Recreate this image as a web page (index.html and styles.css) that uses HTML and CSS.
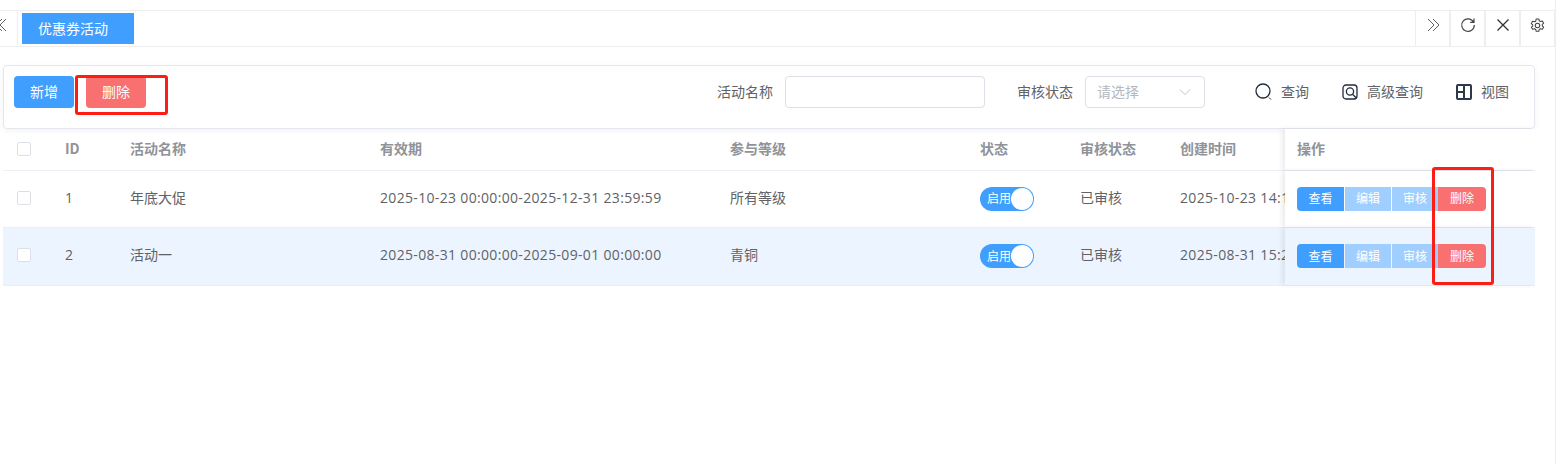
FILE: index.html
```html
<!DOCTYPE html>
<html lang="zh">
<head>
<meta charset="utf-8">
<title>优惠券活动</title>
<link rel="stylesheet" href="styles.css">
</head>
<body>
<div class="page">
  <div class="topgap"></div>
  <div class="tabs">
    <div class="tab-cell tab-first">
      <svg viewBox="0 0 16 16" width="16" height="16"><path d="M10 2 4 8l6 6M14 2 8 8l6 6" fill="none" stroke="#606266" stroke-width="1"/></svg>
    </div>
    <div class="tab-active">优惠券活动</div>
    <div class="tab-fill"></div>
    <div class="tab-cell"><svg viewBox="0 0 16 16" width="16" height="16"><path d="M3 2l6 6-6 6M8 2l6 6-6 6" fill="none" stroke="#606266" stroke-width="1"/></svg></div>
    <div class="tab-cell"><svg viewBox="0 0 16 16" width="16" height="16"><path d="M13.600 5.200A6.300 6.300 0 1 0 14.300 8M14 1.600v3.800h-3.800" fill="none" stroke="#404348" stroke-width="1.200"/></svg></div>
    <div class="tab-cell"><svg viewBox="0 0 16 16" width="16" height="16"><path d="M2.500 2.500l11 11M13.500 2.500l-11 11" fill="none" stroke="#303133" stroke-width="1.300"/></svg></div>
    <div class="tab-cell"><svg viewBox="0 0 16 16" width="15" height="15"><path d="M6.600 1h2.800l.5 2 1.300.7 2-.6 1.400 2.400-1.500 1.400v1.400l1.500 1.400-1.400 2.400-2-.6-1.300.7-.5 2H6.600l-.5-2-1.300-.7-2 .6-1.400-2.400L2.900 8.700V7.300L1.400 5.900l1.400-2.400 2 .6 1.300-.7z" fill="none" stroke="#404348" stroke-width="1.100" stroke-linejoin="round"/><circle cx="8" cy="8" r="2.400" fill="none" stroke="#404348" stroke-width="1.100"/></svg></div>
  </div>
  <main class="content">
    <section class="toolbar">
      <div class="btn-group">
        <button class="btn btn-primary">新增</button>
        <button class="btn btn-danger">删除</button>
      </div>
      <div class="filters">
        <label class="flabel">活动名称</label>
        <div class="input input-name"></div>
        <label class="flabel flabel-audit">审核状态</label>
        <div class="input input-select"><span class="tx">请选择</span>
          <svg viewBox="0 0 12 12" width="12" height="12"><path d="M1 3.500l5 5 5-5" fill="none" stroke="#c0c4cc" stroke-width="1"/></svg>
        </div>
        <div class="tool tool-search">
          <svg viewBox="0 0 18 18" width="18" height="18"><circle cx="9" cy="8" r="7" fill="none" stroke="#1f2d3d" stroke-width="1.300"/><path d="M15 14.500l2 2" fill="none" stroke="#1f2d3d" stroke-width="1"/></svg>
          <span class="tx">查询</span>
        </div>
        <div class="tool tool-adv">
          <svg viewBox="0 0 16 16" width="16" height="16"><rect x="1" y="1" width="14" height="14" rx="3" fill="none" stroke="#1f2d3d" stroke-width="1.300"/><circle cx="8" cy="7.500" r="3.600" fill="none" stroke="#1f2d3d" stroke-width="1.300"/><path d="M10.500 10.200l3.500 3.500" stroke="#1f2d3d" stroke-width="1.300"/></svg>
          <span class="tx">高级查询</span>
        </div>
        <div class="tool tool-view">
          <svg viewBox="0 0 16 16" width="16" height="16"><rect x="1" y="1" width="14" height="14" rx="1" fill="none" stroke="#2b3a4c" stroke-width="2"/><path d="M8 1v14M1 8h7" stroke="#2b3a4c" stroke-width="2"/></svg>
          <span class="tx">视图</span>
        </div>
      </div>
    </section>
    <section class="table">
      <div class="row head">
        <div class="c c-check"><span class="check"></span></div>
        <div class="c c-id">ID</div>
        <div class="c c-name">活动名称</div>
        <div class="c c-valid">有效期</div>
        <div class="c c-level">参与等级</div>
        <div class="c c-status">状态</div>
        <div class="c c-audit">审核状态</div>
        <div class="c c-time">创建时间</div>
        <div class="c c-op">操作</div>
      </div>
      <div class="row body r1">
        <div class="c c-check"><span class="check"></span></div>
        <div class="c c-id date">1</div>
        <div class="c c-name">年底大促</div>
        <div class="c c-valid date">2025-10-23 00:00:00-2025-12-31 23:59:59</div>
        <div class="c c-level">所有等级</div>
        <div class="c c-status"><span class="switch"><span class="switch-text">启用</span><span class="knob"></span></span></div>
        <div class="c c-audit">已审核</div>
        <div class="c c-time date">2025-10-23 14:1</div>
        <div class="c c-op"><div class="ops"><span class="op op-view">查看</span><span class="op op-light">编辑</span><span class="op op-light">审核</span><span class="op op-del">删除</span></div></div>
      </div>
      <div class="row body r2">
        <div class="c c-check"><span class="check"></span></div>
        <div class="c c-id date">2</div>
        <div class="c c-name">活动一</div>
        <div class="c c-valid date">2025-08-31 00:00:00-2025-09-01 00:00:00</div>
        <div class="c c-level">青铜</div>
        <div class="c c-status"><span class="switch"><span class="switch-text">启用</span><span class="knob"></span></span></div>
        <div class="c c-audit">已审核</div>
        <div class="c c-time date">2025-08-31 15:2</div>
        <div class="c c-op"><div class="ops"><span class="op op-view">查看</span><span class="op op-light">编辑</span><span class="op op-light">审核</span><span class="op op-del">删除</span></div></div>
      </div>
    </section>
  </main>
</div>
<div class="mark mark-top"></div>
<div class="mark mark-col"></div>
</body>
</html>
```
FILE: styles.css
```css
* { box-sizing: border-box; }
html, body { margin: 0; height: 100%; background: #fff; overflow: hidden; }
body { font-family: "Noto Sans CJK SC", "Noto Sans", sans-serif; font-size: 14px; color: #606266; }
.page { width: 1556px; height: 464px; border-right: 1px solid #eeeeee; }
.topgap { height: 10px; }
.tabs { height: 37px; border-top: 1px solid #eeeeee; border-bottom: 1px solid #eeeeee; display: flex; align-items: stretch; }
.tab-cell { width: 35px; border-left: 1px solid #eeeeee; border-right: 1px solid #eeeeee; display: flex; align-items: center; justify-content: center; padding-bottom: 7px; }
.tab-cell svg { flex: none; }
.tab-first { width: 18px; border-left: 0; justify-content: flex-end; padding-right: 9px; overflow: hidden; }
.tab-active { margin: 2px 0 2px 4px; width: 112px; background: #409eff; color: #fff; display: flex; align-items: center; padding: 0 0 1px 16px; }
.tab-fill { flex: 1; }
.content { padding: 18px 20px 0 3px; }
.toolbar { height: 64px; border: 1px solid #e4e7ed; border-radius: 4px; box-shadow: 0 2px 6px rgba(0, 0, 0, .05); display: flex; justify-content: space-between; padding: 10px 0 0 10px; }
.btn-group { display: flex; gap: 12px; }
.btn { width: 60px; height: 32px; border: 0; border-radius: 4px; color: #fff; font: inherit; padding: 0 0 3px; }
.btn-primary { background: #409eff; }
.btn-danger { background: #f97070; }
.filters { display: flex; align-items: flex-start; padding-right: 25px; }
.flabel { height: 32px; line-height: 30px; margin-right: 12px; }
.flabel-audit { margin-left: 32px; }
.input { height: 32px; border: 1px solid #dcdfe6; border-radius: 4px; background: #fff; }
.input-name { width: 200px; }
.input-select { width: 120px; color: #b4b8c0; display: flex; align-items: center; justify-content: space-between; padding: 0 13px 0 11px; }
.tx { padding-bottom: 2px; }
.tool { height: 32px; display: flex; align-items: center; gap: 9px; color: #606266; }
.tool-search { margin-left: 49px; }
.tool-adv { margin-left: 33px; }
.tool-view { margin-left: 33px; }
.row { display: flex; }
.head { height: 42px; font-weight: 700; color: #909399; border-bottom: 1px solid #ebeef5; }
.body { border-bottom: 1px solid #ebeef5; }
.r1 { height: 57px; }
.r2 { height: 58px; background: #ecf5ff; }
.c { display: flex; align-items: center; padding: 0 0 3px 12px; white-space: nowrap; }
.r1 .c { padding-bottom: 5px; }
.r2 .c { padding-bottom: 5px; }
.date { font-family: "Open Sans", "Noto Sans CJK SC", sans-serif; letter-spacing: .33px; }
.r1 .date { padding-bottom: 4px; }
.c-check { width: 50px; padding: 0 0 2px 14px; }
.head .c-check { padding-bottom: 1px; }
.r1 .c-check { padding-bottom: 2px; }
.r2 .c-check { padding-bottom: 3px; }
.c-id { width: 65px; }
.c-name { width: 250px; }
.c-valid { width: 350px; }
.c-level { width: 250px; }
.c-status { width: 100px; }
.r1 .c-status, .r2 .c-status { padding-bottom: 1px; }
.c-audit { width: 100px; }
.c-time { width: 117px; overflow: hidden; }
.c-op { width: 250px; box-shadow: -3px 0 5px rgba(0, 0, 0, .08); background: #fff; }
.r1 .c-op, .r2 .c-op { padding-bottom: 1px; }
.r2 .c-op { background: #ecf5ff; }
.check { width: 14px; height: 14px; border: 1px solid #dcdfe6; border-radius: 2px; background: #fff; }
.switch { width: 54px; height: 24px; border-radius: 12px; background: #409eff; color: #fff; font-size: 12px; display: flex; align-items: center; justify-content: space-between; padding: 0 1px 0 7px; }
.switch-text { padding-bottom: 2px; }
.knob { width: 22px; height: 22px; border-radius: 50%; background: #fff; }
.ops { display: flex; gap: 1px; border-radius: 4px; overflow: hidden; }
.op { width: 47px; height: 24px; font-size: 12px; color: #fff; display: flex; align-items: center; justify-content: center; padding-bottom: 2px; }
.op-view { background: #409eff; }
.op-light { width: 46px; background: #a0cfff; }
.op-del { background: #f97070; width: 48px; margin-left: -1px; }
.mark { position: absolute; z-index: 2; border: 3px solid #fa1e14; border-radius: 3px; }
.mark-top { left: 75px; top: 75px; width: 93px; height: 40px; }
.mark-col { left: 1432px; top: 167px; width: 62px; height: 118px; }
```
